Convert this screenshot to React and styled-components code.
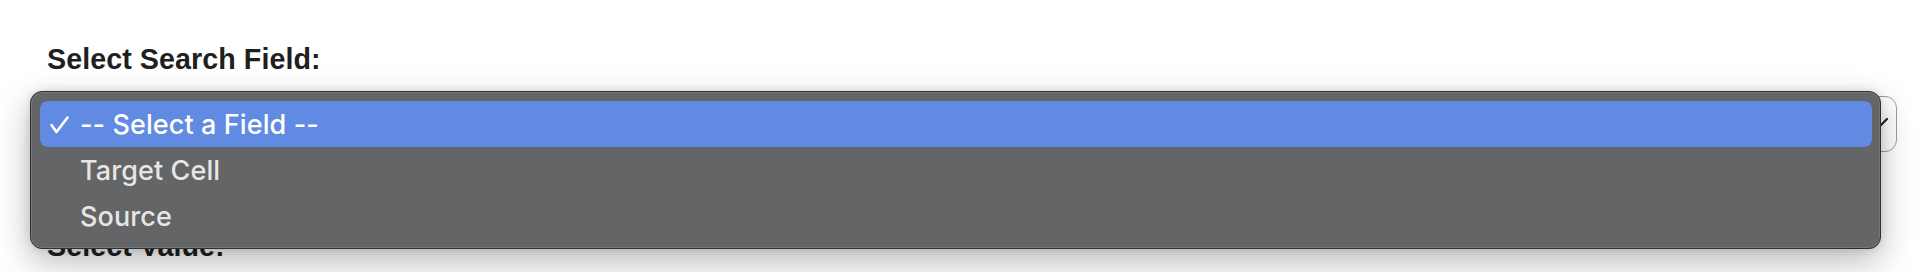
import React from "react";
import styled, { createGlobalStyle } from "styled-components";

const Global = createGlobalStyle`
  html, body { margin: 0; padding: 0; background: #ffffff; }
  body { font-family: "Liberation Sans", Arial, sans-serif; }
  * { box-sizing: border-box; }
`;

const Page = styled.div`
  width: 1930px;
  height: 272px;
  overflow: hidden;
  padding: 43px 33px 0 47px;
  display: flex;
  flex-direction: column;
`;

const Group = styled.div`
  display: flex;
  flex-direction: column;
  gap: ${(p) => p.$gap}px;
  margin-top: ${(p) => p.$top || 0}px;
`;

const Label = styled.label`
  display: block;
  font-family: "Liberation Sans", Arial, sans-serif;
  font-weight: 700;
  font-size: 28.7px;
  letter-spacing: 0.05px;
  line-height: 32px;
  color: #1f1f1f;
`;

const SelectWrap = styled.div`
  position: relative;
`;

const SelectBox = styled.div`
  height: 56px;
  border: 1.5px solid #9c9c9c;
  border-radius: 12px;
  background: #ffffff;
  display: flex;
  align-items: center;
  justify-content: flex-end;
  padding-right: 6px;
`;

const Menu = styled.div`
  position: absolute;
  top: -5px;
  left: -17px;
  right: 16px;
  z-index: 2;
  background: #646566;
  border: 1px solid #2f2f2f;
  border-radius: 12px;
  box-shadow: inset 0 0 0 1px rgba(255, 255, 255, 0.12),
    0 12px 34px rgba(0, 0, 0, 0.28), 0 0 10px rgba(0, 0, 0, 0.12);
  padding: 9px 8px 9px 9px;
  display: flex;
  flex-direction: column;
`;

const Option = styled.div`
  height: 46px;
  border-radius: 8px;
  display: flex;
  align-items: center;
  padding-left: 10px;
  padding-top: 1px;
  gap: 11px;
  font-family: Inter, "Noto Sans", sans-serif;
  font-size: 27px;
  font-weight: 450;
  letter-spacing: 0.1px;
  color: ${(p) => (p.$active ? "#ffffff" : "#e6e6e6")};
  background: ${(p) => (p.$active ? "#618ae3" : "transparent")};
`;

const CheckSlot = styled.span`
  width: 19px;
  height: 18px;
  display: flex;
  align-items: center;
  justify-content: center;
  flex-shrink: 0;
`;

const Check = () => (
  <svg width="19" height="18" viewBox="0 0 19 18">
    <polyline
      points="1.5,9 6.5,16 17.5,1.5"
      fill="none"
      stroke="#ffffff"
      strokeWidth="2.6"
      strokeLinecap="round"
      strokeLinejoin="round"
    />
  </svg>
);

const Chevron = () => (
  <svg width="24" height="14" viewBox="0 0 24 14">
    <polyline
      points="2,2 12,11 21,2"
      fill="none"
      stroke="#222"
      strokeWidth="2.2"
      strokeLinecap="round"
      strokeLinejoin="round"
    />
  </svg>
);

const options = ["-- Select a Field --", "Target Cell", "Source"];

export default function App() {
  return (
    <>
      <Global />
      <Page>
        <Group $gap={21}>
          <Label>Select Search Field:</Label>
          <SelectWrap>
            <SelectBox>
              <Chevron />
            </SelectBox>
            <Menu>
              {options.map((o, i) => (
                <Option key={o} $active={i === 0}>
                  <CheckSlot>{i === 0 ? <Check /> : null}</CheckSlot>
                  {o}
                </Option>
              ))}
            </Menu>
          </SelectWrap>
        </Group>
        <Group $gap={21} $top={78}>
          <Label>Select Value:</Label>
        </Group>
      </Page>
    </>
  );
}
